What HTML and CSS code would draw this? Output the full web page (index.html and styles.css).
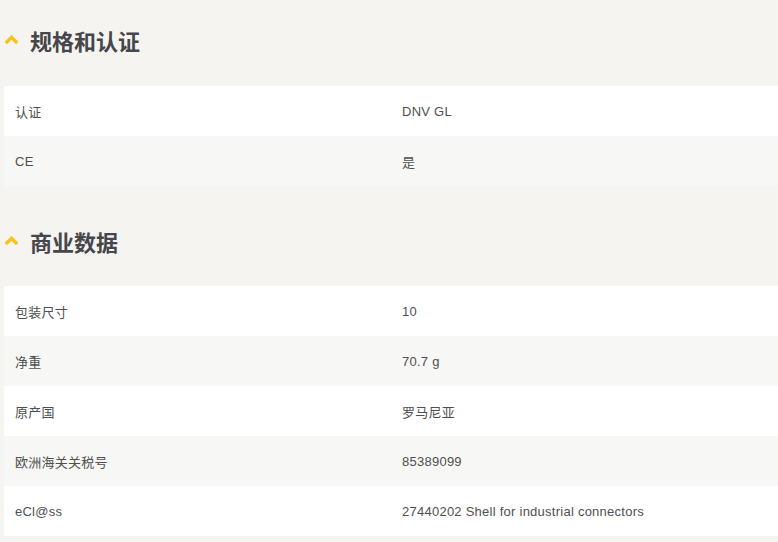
FILE: index.html
```html
<!DOCTYPE html>
<html lang="zh">
<head>
<meta charset="utf-8">
<link rel="stylesheet" href="styles.css">
</head>
<body>
<section class="sec sec-first">
  <h2 class="sec-title">
    <svg class="chev" width="15" height="10" viewBox="0 0 15 10"><path d="M1.8 8 L7.5 2.3 L13.2 8" fill="none" stroke="#f7c31a" stroke-width="3.4"/></svg>
    <span>规格和认证</span>
  </h2>
  <div class="tbl">
    <div class="row"><div class="cell">认证</div><div class="cell val">DNV GL</div></div>
    <div class="row"><div class="cell">CE</div><div class="cell val">是</div></div>
  </div>
</section>
<section class="sec">
  <h2 class="sec-title">
    <svg class="chev" width="15" height="10" viewBox="0 0 15 10"><path d="M1.8 8 L7.5 2.3 L13.2 8" fill="none" stroke="#f7c31a" stroke-width="3.4"/></svg>
    <span>商业数据</span>
  </h2>
  <div class="tbl">
    <div class="row"><div class="cell">包装尺寸</div><div class="cell val">10</div></div>
    <div class="row"><div class="cell">净重</div><div class="cell val">70.7 g</div></div>
    <div class="row"><div class="cell">原产国</div><div class="cell val">罗马尼亚</div></div>
    <div class="row"><div class="cell">欧洲海关关税号</div><div class="cell val">85389099</div></div>
    <div class="row"><div class="cell">eCl@ss</div><div class="cell val">27440202 Shell for industrial connectors</div></div>
  </div>
</section>
</body>
</html>
```
FILE: styles.css
```css
html, body {
  margin: 0;
  padding: 0;
  background: #f5f4f0;
}
body {
  font-family: "Liberation Sans", Arial, "Noto Sans CJK SC", sans-serif;
  color: #555;
  width: 778px;
  overflow: hidden;
}
.sec {
  padding-top: 14px;
}
.sec-first {
  padding-top: 0;
}
.sec-title {
  display: flex;
  align-items: center;
  gap: 11px;
  margin: 0;
  height: 86px;
  box-sizing: border-box;
  padding-left: 4px;
  padding-bottom: 4px;
  font-size: 22px;
  font-weight: bold;
  color: #46464b;
  font-family: "Noto Sans CJK SC", sans-serif;
}
.sec-first .sec-title {
  padding-bottom: 7px;
}
.chev {
  display: block;
  margin-top: 0;
}
.tbl {
  margin-left: 4px;
}
.row {
  display: grid;
  grid-template-columns: 387px 1fr;
  height: 50px;
  align-items: center;
  background: #fff;
}
.row:nth-child(even) {
  background: #f7f7f5;
}
.cell {
  padding-left: 11px;
  font-size: 13px;
  letter-spacing: 0.25px;
  color: #4f4f4f;
  font-family: "Liberation Sans", Arial, "Noto Sans CJK SC", sans-serif;
}
```
